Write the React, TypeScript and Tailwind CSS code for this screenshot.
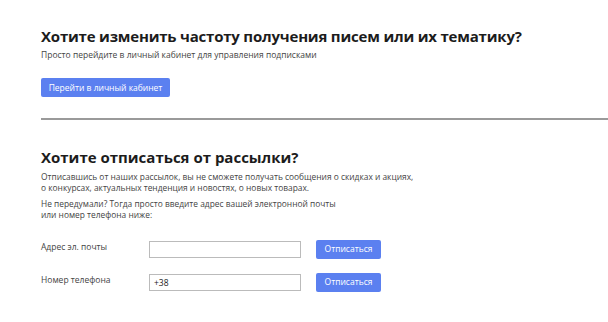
export default function App() {
  const font = { fontFamily: '"Open Sans", "Liberation Sans", sans-serif' };
  return (
    <div className="w-[608px] h-[322px] bg-white overflow-hidden text-[#333]" style={font}>
      <div className="pl-[41px] pt-[26px]">
        <h1 className="text-[15px] leading-[20px] font-bold text-[#1c1c1c] whitespace-nowrap tracking-[-0.2px]">
          Хотите изменить частоту получения писем или их тематику?
        </h1>
        <p className="mt-[3px] text-[8.5px] leading-[12px] text-[#444]">
          Просто перейдите в личный кабинет для управления подписками
        </p>
        <button className="mt-[17px] w-[129px] h-[19px] rounded-[2px] bg-[#5b80f0] text-white text-[8.5px] leading-[19px]">
          Перейти в личный кабинет
        </button>
        <div className="mt-[21px] h-[2px] bg-[#9a9a9a]" />
        <h2 className="mt-[27px] text-[15px] leading-[20px] font-bold text-[#1c1c1c]">
          Хотите отписаться от рассылки?
        </h2>
        <p className="mt-[4px] text-[8.4px] leading-[11px] text-[#444]">
          Отписавшись от наших рассылок, вы не сможете получать сообщения о скидках и акциях,
          <br />о конкурсах, актуальных тенденция и новостях, о новых товарах.
        </p>
        <p className="mt-[5px] text-[8.4px] leading-[11px] text-[#444]">
          Не передумали? Тогда просто введите адрес вашей электронной почты
          <br />
          или номер телефона ниже:
        </p>
        <div className="mt-[20px] flex items-center h-[19px]">
          <span className="w-[108px] text-[8.5px] leading-[12px] text-[#444] -mt-[5px]">Адрес эл. почты</span>
          <input className="w-[152px] h-[17px] border border-[#bbb] text-[8.5px] px-[4px] outline-none" />
          <button className="ml-[15px] w-[65px] h-[19px] rounded-[2px] bg-[#5b80f0] text-white text-[8.5px]">
            Отписаться
          </button>
        </div>
        <div className="mt-[14px] flex items-center h-[19px]">
          <span className="w-[108px] text-[8.5px] leading-[12px] text-[#444] -mt-[5px]">Номер телефона</span>
          <input
            defaultValue="+38"
            className="w-[152px] h-[17px] border border-[#bbb] text-[8.5px] px-[4px] outline-none text-[#222]"
          />
          <button className="ml-[15px] w-[65px] h-[19px] rounded-[2px] bg-[#5b80f0] text-white text-[8.5px]">
            Отписаться
          </button>
        </div>
      </div>
    </div>
  );
}
